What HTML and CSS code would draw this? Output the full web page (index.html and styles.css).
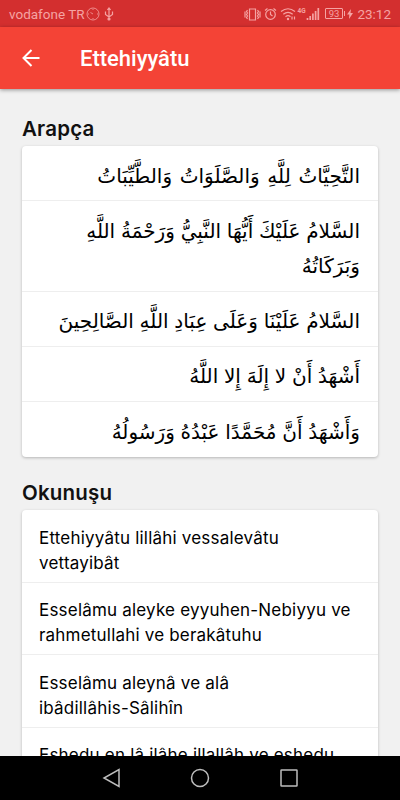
FILE: index.html
```html
<!DOCTYPE html>
<html lang="tr">
<head>
  <meta charset="UTF-8" />
  <meta name="viewport" content="width=device-width, initial-scale=1.0">
  <title>Ettehiyyâtu</title>
  <link rel="stylesheet" href="styles.css">
</head>
<body>
  <div class="status">
    <span class="carrier">vodafone TR</span>
    <svg class="dial" width="14" height="14" viewBox="0 0 14 14"><circle cx="7" cy="7" r="6"/><path d="M7 7L4.500 5.500M7 2v1M7 11v1M11 7h1M2 7h1"/></svg>
    <svg class="usb" width="10" height="14" viewBox="0 0 10 14"><path d="M5 13V1M3.400 3L5 1l1.600 2M1.500 4.500v3L5 10l3.500-2.500v-3"/><circle cx="5" cy="12" r="1"/></svg>
    <svg class="icons" width="63" height="16" viewBox="0 0 63 16">
      <path d="M5.500 3h6v11h-6zM3.500 4l-1 1.500 1 1.500-1 1.500 1 1.500-1 1.500 1 1.500M1 5.500v6M13.500 4l1 1.500-1 1.500 1 1.500-1 1.500 1 1.500-1 1.500M16 5.500v6"/>
      <circle cx="26.500" cy="8.500" r="4.800"/>
      <path d="M26.500 5.500v3l2 1.500M21 4.500l2.500-2M32 4.500l-2.500-2M37 5.500q7-5.500 14 0M39.300 8.200q4.700-3.800 9.400 0M41.500 10.700q2.500-2 5 0"/>
      <circle class="dot" cx="44" cy="13" r="1.200"/><path d="M48 10.500v3M50.500 10.500v3"/>
    </svg>
    <span class="net">4G</span>
    <svg class="signal" width="14" height="12" viewBox="0 0 14 12"><path d="M1.500 10v2M4.200 8v4M6.900 5.500v6.500M9.600 3v9M12.300 0v12"/></svg>
    <span class="battery">93</span>
    <svg class="bolt" width="6" height="10" viewBox="0 0 6 10"><path d="M4 0L0 5.500h2.300L2 10l4-6H3.500z"/></svg>
    <span class="clock">23:12</span>
  </div>

  <header class="toolbar">
    <svg width="20" height="20" viewBox="0 0 20 20"><path d="M18.500 10H2.500M10.500 2L2.500 10l8 8"/></svg>
    <h1>Ettehiyyâtu</h1>
  </header>

  <main class="content">
    <h2>Arapça</h2>
    <ul class="card arabic" lang="ar" dir="rtl">
      <li class="wide">التَّحِيَّاتُ لِلَّهِ وَالصَّلَوَاتُ وَالطَّيِّبَاتُ</li>
      <li>السَّلامُ عَلَيْكَ أَيُّهَا النَّبِيُّ وَرَحْمَةُ اللَّهِ<br>وَبَرَكَاتُهُ</li>
      <li>السَّلامُ عَلَيْنَا وَعَلَى عِبَادِ اللَّهِ الصَّالِحِينَ</li>
      <li>أَشْهَدُ أَنْ لا إِلَهَ إِلا اللَّهُ</li>
      <li>وَأَشْهَدُ أَنَّ مُحَمَّدًا عَبْدُهُ وَرَسُولُهُ</li>
    </ul>

    <h2>Okunuşu</h2>
    <ul class="card reading">
      <li>Ettehiyyâtu lillâhi vessalevâtu<br>vettayibât</li>
      <li>Esselâmu aleyke eyyuhen-Nebiyyu ve<br>rahmetullahi ve berakâtuhu</li>
      <li>Esselâmu aleynâ ve alâ<br>ibâdillâhis-Sâlihîn</li>
      <li>Eshedu en lâ ilâhe illallâh ve eshedu</li>
    </ul>
  </main>

  <nav class="navbar">
    <svg width="20" height="20" viewBox="0 0 20 20"><path d="M18 1.500v17L3 10z"/></svg>
    <svg width="20" height="20" viewBox="0 0 20 20"><circle cx="10" cy="10" r="8.500"/></svg>
    <svg width="20" height="20" viewBox="0 0 20 20"><rect x="2" y="2" width="16" height="16" rx="0.500"/></svg>
  </nav>
</body>
</html>
```

FILE: styles.css
```css
* {
  box-sizing: border-box;
}
body {
  margin: 0;
  height: 800px;
  display: flex;
  flex-direction: column;
  overflow: hidden;
  background: #f1f1f1;
  color: #111;
  font-family: Inter, sans-serif;
}
svg {
  flex: none;
  fill: none;
  stroke: currentColor;
}
.status {
  flex: none;
  height: 27px;
  display: flex;
  align-items: center;
  padding: 0 9px;
  background: #d32f2f;
  color: #f5a3a3;
  font-family: Roboto, sans-serif;
  white-space: nowrap;
}
.carrier {
  width: 76px;
  font-size: 13.500px;
}
.dial {
  margin-left: 1px;
  stroke-width: 0.800;
}
.usb {
  margin-left: 4px;
  stroke-width: 1.200;
}
.icons {
  margin-left: 130px;
  stroke-width: 1.200;
}
.dot, .bolt {
  fill: currentColor;
  stroke: none;
}
.net {
  width: 8px;
  margin: -6px 0 0 -9px;
  font-size: 6.500px;
  font-weight: 700;
}
.signal {
  stroke-width: 1.700;
}
.battery {
  position: relative;
  width: 21px;
  height: 11px;
  margin-left: 5px;
  border: 1px solid;
  border-radius: 1px;
  font-size: 9.500px;
  line-height: 9px;
  text-align: center;
}
.battery::after {
  content: "";
  position: absolute;
  right: -3px;
  top: 2px;
  width: 1px;
  height: 5px;
  background: currentColor;
}
.bolt {
  margin-left: 4px;
}
.clock {
  margin-left: 4px;
  font-size: 13.500px;
}
.toolbar {
  flex: none;
  height: 62px;
  display: flex;
  align-items: center;
  gap: 39px;
  padding: 0 21px;
  background: #f44336;
  color: #fff;
  box-shadow: 0 1px 4px rgba(0, 0, 0, 0.400);
}
.toolbar svg {
  stroke-width: 2;
}
.toolbar h1 {
  margin: 0;
  font: 500 22px Roboto, sans-serif;
}
.content {
  flex: 1;
  min-height: 0;
  overflow: hidden;
  padding: 27px 22px 0;
}
.content h2 {
  margin: 0;
  height: 30px;
  font-size: 20.500px;
  font-weight: 600;
  line-height: 26px;
  letter-spacing: 0.200px;
}
.card {
  margin: 0 0 23px;
  padding: 0;
  list-style: none;
  background: #fff;
  border-radius: 4px;
  box-shadow: 0 1px 3px rgba(0, 0, 0, 0.250);
  white-space: nowrap;
}
.card li {
  border-bottom: 1px solid #eee;
}
.card li:last-child {
  border-bottom: 0;
}
.arabic li {
  padding: 12.500px 18px 6.750px;
  color: #000;
  font-family: "DejaVu Sans", sans-serif;
  font-size: 20px;
  line-height: 35px;
  word-spacing: -0.600px;
}
.arabic .wide {
  word-spacing: 1.300px;
}
.arabic li:last-child {
  padding-bottom: 7.750px;
}
.reading li {
  padding: 15.500px 17px 6px;
  color: #000;
  font-size: 17px;
  line-height: 25px;
  letter-spacing: 0.200px;
}
.navbar {
  flex: none;
  height: 44px;
  display: flex;
  align-items: center;
  justify-content: center;
  gap: 69px;
  background: #000;
  color: #bdbdbd;
}
.navbar svg {
  stroke-width: 1.500;
}
```
